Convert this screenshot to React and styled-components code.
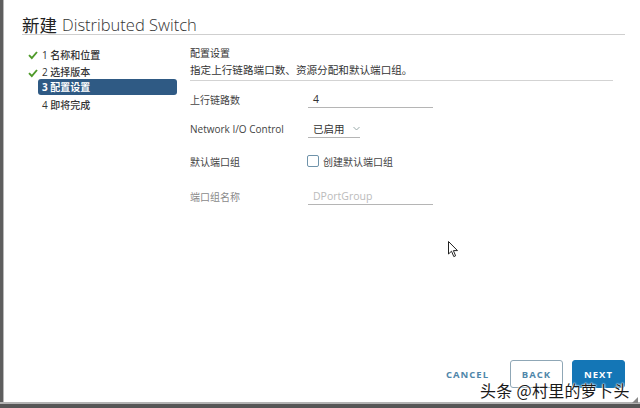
import styled, { createGlobalStyle } from 'styled-components';

const GlobalStyle = createGlobalStyle`
  html, body {
    margin: 0;
    padding: 0;
    background: #fff;
  }
  body {
    font-family: "Open Sans", "Noto Sans CJK SC", sans-serif;
    color: #333;
  }
`

const CJK = `"Open Sans", "Noto Sans CJK SC", sans-serif`

const Screen = styled.div`
  width: 640px;
  height: 408px;
  display: flex;
  flex-direction: column;
  position: relative;
  overflow: hidden;
`

const Main = styled.div`
  flex: 1;
  display: flex;
  min-height: 0;
`

const LeftEdge = styled.div`
  width: 3px;
  background: #5e5e5e;
  border-right: 1px solid #b8b8b8;
`

const BottomEdge = styled.div`
  height: 4px;
  background: #565656;
  border-top: 2px solid #b4b4b4;
`

const Dialog = styled.div`
  flex: 1;
  display: flex;
  flex-direction: column;
  padding: 12px 15px 0 18px;
  background: #fff;
`

const Header = styled.div`
  height: 19px;
  padding-top: 3px;
  border-bottom: 1.5px solid #cfcfcf;
  display: flex;
  align-items: center;
  gap: 5px;
`

const TitleCjk = styled.span`
  font-family: "Noto Sans CJK SC", sans-serif;
  font-size: 17.5px;
  color: #222;
  line-height: 19px;
`

const TitleText = styled.span`
  font-family: "Open Sans", sans-serif;
  font-size: 16.5px;
  font-weight: 300;
  color: #333;
  line-height: 19px;
`

const Body = styled.div`
  flex: 1;
  display: grid;
  grid-template-columns: 155px 1fr;
  column-gap: 13px;
  padding-top: 8px;
`

const Nav = styled.ul`
  list-style: none;
  margin: 0;
  padding: 0;
  display: flex;
  flex-direction: column;
  gap: 0.5px;
`

const NavItem = styled.li`
  display: grid;
  grid-template-columns: 16px 1fr;
  height: 17px;
  align-items: center;
`

const Check = styled.svg`
  width: 10px;
  height: 10px;
  margin-left: 6px;
`

const NavLabel = styled.span`
  height: ${p => (p.$active ? '16px' : '17px')};
  display: flex;
  align-items: center;
  padding-left: 4px;
  border-radius: 3px;
  font-family: ${CJK};
  font-size: 10px;
  font-weight: ${p => (p.$active ? 700 : 500)};
  color: ${p => (p.$active ? '#fff' : '#333')};
  background: ${p => (p.$active ? '#2f5a84' : 'transparent')};
`

const Content = styled.div`
  display: flex;
  flex-direction: column;
  padding: 2px 12px 0 0;
`

const SectionTitle = styled.div`
  font-family: ${CJK};
  font-size: 10px;
  color: #333;
  line-height: 17px;
`

const SectionDesc = styled.div`
  font-family: ${CJK};
  font-size: 10.6px;
  color: #333;
  line-height: 17px;
  padding-bottom: 1px;
  border-bottom: 1.5px solid #d3d3d3;
`

const Form = styled.div`
  display: flex;
  flex-direction: column;
  padding-top: 8px;
`

const Row = styled.div`
  display: grid;
  grid-template-columns: 118px auto;
  align-items: center;
  height: ${p => p.$h}px;
`

const Label = styled.span`
  font-family: ${CJK};
  font-size: 10px;
  color: ${p => (p.$muted ? '#8a8a8a' : '#444')};
`

const Field = styled.div`
  width: ${p => p.$w}px;
  height: 18px;
  box-sizing: border-box;
  display: flex;
  align-items: center;
  gap: 8px;
  padding: 0 5px;
  white-space: nowrap;
  border-bottom: 1px solid #b5b5b5;
  font-family: ${CJK};
  font-size: 10.5px;
  color: ${p => (p.$placeholder ? '#bbb' : '#333')};
`

const Chevron = styled.svg`
  width: 7px;
  height: 5px;
  flex-shrink: 0;
`

const CheckLabel = styled.label`
  display: flex;
  align-items: center;
  gap: 4px;
  font-family: ${CJK};
  font-size: 10px;
  color: #444;
`

const Box = styled.span`
  width: 12px;
  height: 12px;
  box-sizing: border-box;
  border: 1.5px solid #6f93aa;
  border-radius: 2px;
  margin-left: -1px;
`

const Footer = styled.div`
  height: 42px;
  display: flex;
  justify-content: flex-end;
  align-items: flex-start;
  gap: 9px;
`

const Button = styled.button`
  width: ${p => (p.$kind === 'flat' ? 'auto' : '53px')};
  height: 28px;
  box-sizing: border-box;
  padding: 0;
  border-radius: 3px;
  font-family: "Open Sans", sans-serif;
  font-size: 9.5px;
  font-weight: 700;
  letter-spacing: 1px;
  border: 1px solid ${p => (p.$kind === 'primary' ? '#1476b6' : p.$kind === 'outline' ? '#8fa7b6' : 'transparent')};
  background: ${p => (p.$kind === 'primary' ? '#1476b6' : '#fff')};
  color: ${p => (p.$kind === 'primary' ? '#fff' : '#4f86aa')};
  margin-right: ${p => (p.$kind === 'flat' ? '11px' : '0')};
`

const Watermark = styled.div`
  position: absolute;
  left: 480px;
  top: 378px;
  font-family: "Noto Sans CJK SC", sans-serif;
  font-size: 16px;
  color: #1a1a1a;
  letter-spacing: 0.3px;
  text-shadow: 0 0 2px #fff, 0 0 2px #fff, 0 0 1px #fff;
`

const Cursor = styled.svg`
  position: absolute;
  left: 448px;
  top: 241px;
  width: 11px;
  height: 17px;
`

const Grip = styled.svg`
  position: absolute;
  right: 2px;
  bottom: 5px;
  width: 6px;
  height: 6px;
`

const steps = [
  { label: '1 名称和位置', done: true },
  { label: '2 选择版本', done: true },
  { label: '3 配置设置', active: true },
  { label: '4 即将完成' },
]

function CheckIcon() {
  return (
    <Check viewBox="0 0 10 10">
      <path d="M1 5.2 L3.8 8 L9 2" fill="none" stroke="#4f9a2a" strokeWidth="1.9" />
    </Check>
  )
}

export default function App() {
  return (
    <Screen>
      <GlobalStyle />
      <Main>
        <LeftEdge />
        <Dialog>
          <Header>
            <TitleCjk>新建</TitleCjk>
            <TitleText>Distributed Switch</TitleText>
          </Header>
          <Body>
            <Nav>
              {steps.map(s => (
                <NavItem key={s.label}>
                  <span>{s.done && <CheckIcon />}</span>
                  <NavLabel $active={s.active}>{s.label}</NavLabel>
                </NavItem>
              ))}
            </Nav>
            <Content>
              <SectionTitle>配置设置</SectionTitle>
              <SectionDesc>指定上行链路端口数、资源分配和默认端口组。</SectionDesc>
              <Form>
                <Row $h={20}>
                  <Label>上行链路数</Label>
                  <Field $w={125}>4</Field>
                </Row>
                <Row $h={40}>
                  <Label>Network I/O Control</Label>
                  <Field $w={52}>
                    已启用
                    <Chevron viewBox="0 0 7 5">
                      <path d="M0.5 1 L3.5 4 L6.5 1" fill="none" stroke="#9aa" strokeWidth="1" />
                    </Chevron>
                  </Field>
                </Row>
                <Row $h={24}>
                  <Label>默认端口组</Label>
                  <CheckLabel>
                    <Box />
                    创建默认端口组
                  </CheckLabel>
                </Row>
                <Row $h={46}>
                  <Label $muted>端口组名称</Label>
                  <Field $w={125} $placeholder>DPortGroup</Field>
                </Row>
              </Form>
            </Content>
          </Body>
          <Footer>
            <Button $kind="flat">CANCEL</Button>
            <Button $kind="outline">BACK</Button>
            <Button $kind="primary">NEXT</Button>
          </Footer>
        </Dialog>
      </Main>
      <BottomEdge />
      <Cursor viewBox="0 0 11 17">
        <path d="M0.5 0.5 L0.5 13 L3.5 10.2 L5.8 15.6 L7.6 14.8 L5.4 9.6 L9.5 9.6 Z" fill="#fff" stroke="#222" strokeWidth="1" strokeLinejoin="round" />
      </Cursor>
      <Grip viewBox="0 0 6 6">
        <path d="M6 0 L6 6 L0 6 Z" fill="#888" />
      </Grip>
      <Watermark>头条 @村里的萝卜头</Watermark>
    </Screen>
  )
}
